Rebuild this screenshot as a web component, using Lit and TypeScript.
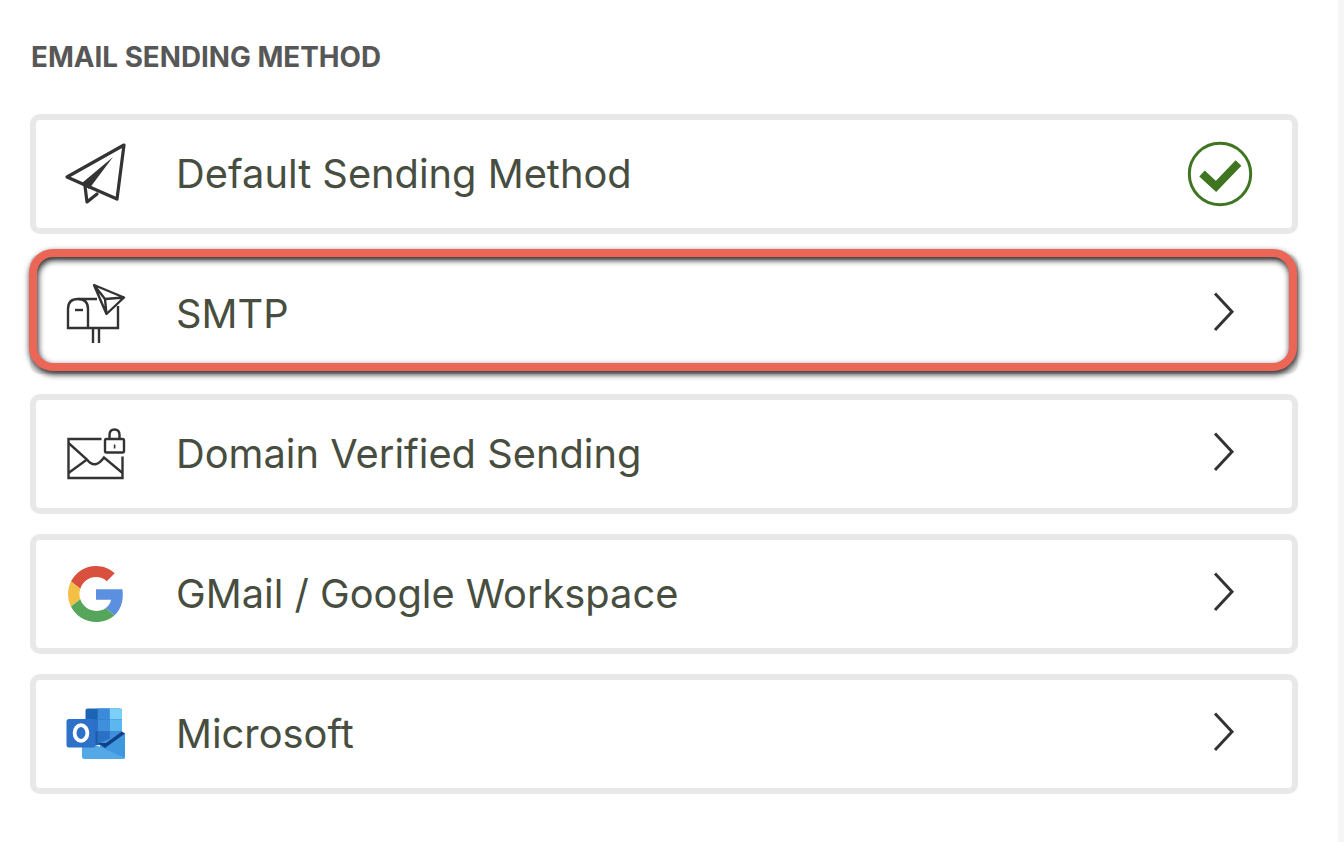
import { LitElement, html, svg, css } from 'lit';
import { customElement } from 'lit/decorators.js';

const plane = svg`
  <g fill="none" stroke="#333" stroke-width="3.2" stroke-linejoin="round" stroke-linecap="round">
    <path d="M64 6 L7 38 L25 46 L57 60 Z"/>
    <path d="M25 47 L27 63 L37 55"/>
  </g>
  <path d="M53 18 L22 44 L29 50 Z" fill="#333"/>`;

const mailbox = svg`
  <g fill="none" stroke="#333" stroke-width="2.4">
    <path d="M58 27 V49 H8 V30 Q8 20 18 20 H37"/>
    <path d="M18 20 Q28 20 28 30 V49"/>
    <path d="M15 31 H23" />
    <path d="M33 49 V64 M39 49 V64"/>
    <path d="M34 6 L64 18.5 L46.5 35 Z M34 6 L45 20 L64 18.5 M45 20 L46.5 35" stroke-linejoin="round"/>
  </g>`;

const envelope = svg`
  <g fill="none" stroke="#333" stroke-width="2.4">
    <path d="M41.5 20 H8.5 V59 H62.5 V37.5"/>
    <path d="M8.5 24 L27 40.5 Q35 51 44 38.5 L62.5 54 M8.5 54 L27 40.5"/>
    <rect x="45" y="20" width="19" height="13.5" rx="1.5"/>
    <path d="M49.5 20 V16 Q49.5 10.5 54.5 10.5 Q59.5 10.5 59.5 16 V20"/>
  </g>
  <rect x="53.8" y="25.5" width="1.6" height="4" fill="#333"/>`;

const google = svg`
  <g transform="translate(8 7) scale(1.1667)">
    <path fill="#d9503f" d="M24 9.5c3.54 0 6.71 1.22 9.21 3.6l6.85-6.85C35.9 2.38 30.47 0 24 0 14.62 0 6.51 5.38 2.56 13.22l7.98 6.19C12.43 13.72 17.74 9.5 24 9.5z"/>
    <path fill="#5b8fdf" d="M46.98 24.55c0-1.57-.15-3.09-.38-4.55H24v9.02h12.94c-.58 2.96-2.26 5.48-4.78 7.18l7.73 6c4.51-4.18 7.09-10.36 7.09-17.65z"/>
    <path fill="#f3bf45" d="M10.53 28.59c-.48-1.45-.76-2.99-.76-4.59s.27-3.14.76-4.59l-7.98-6.19C.92 16.46 0 20.12 0 24c0 3.88.92 7.54 2.56 10.78l7.97-6.19z"/>
    <path fill="#55a65b" d="M24 48c6.48 0 11.93-2.13 15.89-5.81l-7.73-6c-2.15 1.45-4.92 2.3-8.16 2.3-6.26 0-11.57-4.22-13.47-9.91l-7.98 6.19C6.51 42.62 14.62 48 24 48z"/>
  </g>`;

const outlook = svg`
  <path d="M27.5 9.5 H60 Q62 9.5 62 11.5 V46 H25.5 V11.5 Q25.5 9.5 27.5 9.5 Z" fill="#1c65b4"/>
  <rect x="37.7" y="9.5" width="12" height="11" fill="#3a8bdc"/>
  <path d="M49.7 9.5 H60 Q62 9.5 62 11.5 V20.5 H49.7 Z" fill="#7bd0fa"/>
  <rect x="25.5" y="20.5" width="12.2" height="12" fill="#2a70c4"/>
  <rect x="37.7" y="20.5" width="12" height="12" fill="#3f8fdc"/>
  <rect x="49.7" y="20.5" width="12.3" height="12" fill="#5bb7ee"/>
  <rect x="25.5" y="32.5" width="12.2" height="12" fill="#1d5ca8"/>
  <rect x="37.7" y="32.5" width="12" height="12" fill="#2a70c4"/>
  <rect x="49.7" y="32.5" width="12.3" height="12" fill="#3f8fdc"/>
  <path d="M40 44 L62 34.5 L65 34 V57.5 Q65 60 62.5 60 H40 Z" fill="#3f97de"/>
  <path d="M22 46 L36 46 L65 59 Q64.5 60 62.5 60 H24.5 Q22 60 22 57.5 Z" fill="#54a8e6"/>
  <path d="M38 44 L45 49 L65 34.5 L62 32.5 L46 44 Z" fill="#123f8a"/>
  <rect x="6.5" y="20" width="29" height="28.5" rx="2.5" fill="#2d71c8"/>
  <ellipse cx="21" cy="34" rx="6.4" ry="7.8" fill="none" stroke="#fff" stroke-width="3.8"/>`;

const check = svg`
  <circle cx="35" cy="35" r="30.7" fill="none" stroke="#3f7421" stroke-width="3"/>
  <path d="M17 34.5 L31 47.5 L53.5 24" fill="none" stroke="#3f7421" stroke-width="8"/>`;

const chevron = svg`
  <path d="M30 14.5 L47 32.7 L30 51" fill="none" stroke="#333" stroke-width="3" stroke-linejoin="miter"/>`;

const methods = [
  { label: 'Default Sending Method', icon: plane, end: check },
  { label: 'SMTP', icon: mailbox, end: chevron, marked: true },
  { label: 'Domain Verified Sending', icon: envelope, end: chevron },
  { label: 'GMail / Google Workspace', icon: google, end: chevron },
  { label: 'Microsoft', icon: outlook, end: chevron },
];

@customElement('app-root')
export class AppRoot extends LitElement {
  static styles = css`
    :host {
      display: flex;
      height: 842px;
      background-color: #ffffff;
      font-family: Inter, 'Liberation Sans', sans-serif;
      overflow: hidden;
    }
    .main {
      flex: 1;
      padding: 42px 40px 0 30px;
    }
    .strip {
      width: 6px;
      background-color: #f6f6f6;
    }
    h1 {
      margin: 0 0 41px 1px;
      font-size: 27.8px;
      line-height: 31px;
      font-weight: 700;
      color: #575757;
    }
    .list {
      display: flex;
      flex-direction: column;
      gap: 20px;
    }
    .card {
      position: relative;
      display: flex;
      align-items: center;
      height: 120px;
      box-sizing: border-box;
      padding: 0 37px 0 24px;
      border: 6px solid #e8e8e8;
      border-radius: 10px;
    }
    .card svg {
      width: 70px;
      height: 70px;
      flex: none;
    }
    .label {
      flex: 1;
      margin-left: 46px;
      padding-bottom: 2px;
      font-size: 39.8px;
      color: #474e40;
    }
    .mark {
      position: absolute;
      left: -7px;
      top: -11px;
      width: 1268px;
      height: 122px;
      box-sizing: border-box;
      border: 8px solid #ec6657;
      border-radius: 24px;
      filter: drop-shadow(1px 3px 3px rgba(0, 0, 0, 0.9));
    }
  `;

  render() {
    return html`
      <div class="main">
        <h1>EMAIL SENDING METHOD</h1>
        <div class="list">
          ${methods.map(m => html`
            <div class="card">
              <svg viewBox="0 0 70 70">${m.icon}</svg>
              <span class="label">${m.label}</span>
              <svg viewBox="0 0 70 70">${m.end}</svg>
              ${m.marked ? html`<div class="mark"></div>` : ''}
            </div>
          `)}
        </div>
      </div>
      <div class="strip"></div>
    `;
  }
}
